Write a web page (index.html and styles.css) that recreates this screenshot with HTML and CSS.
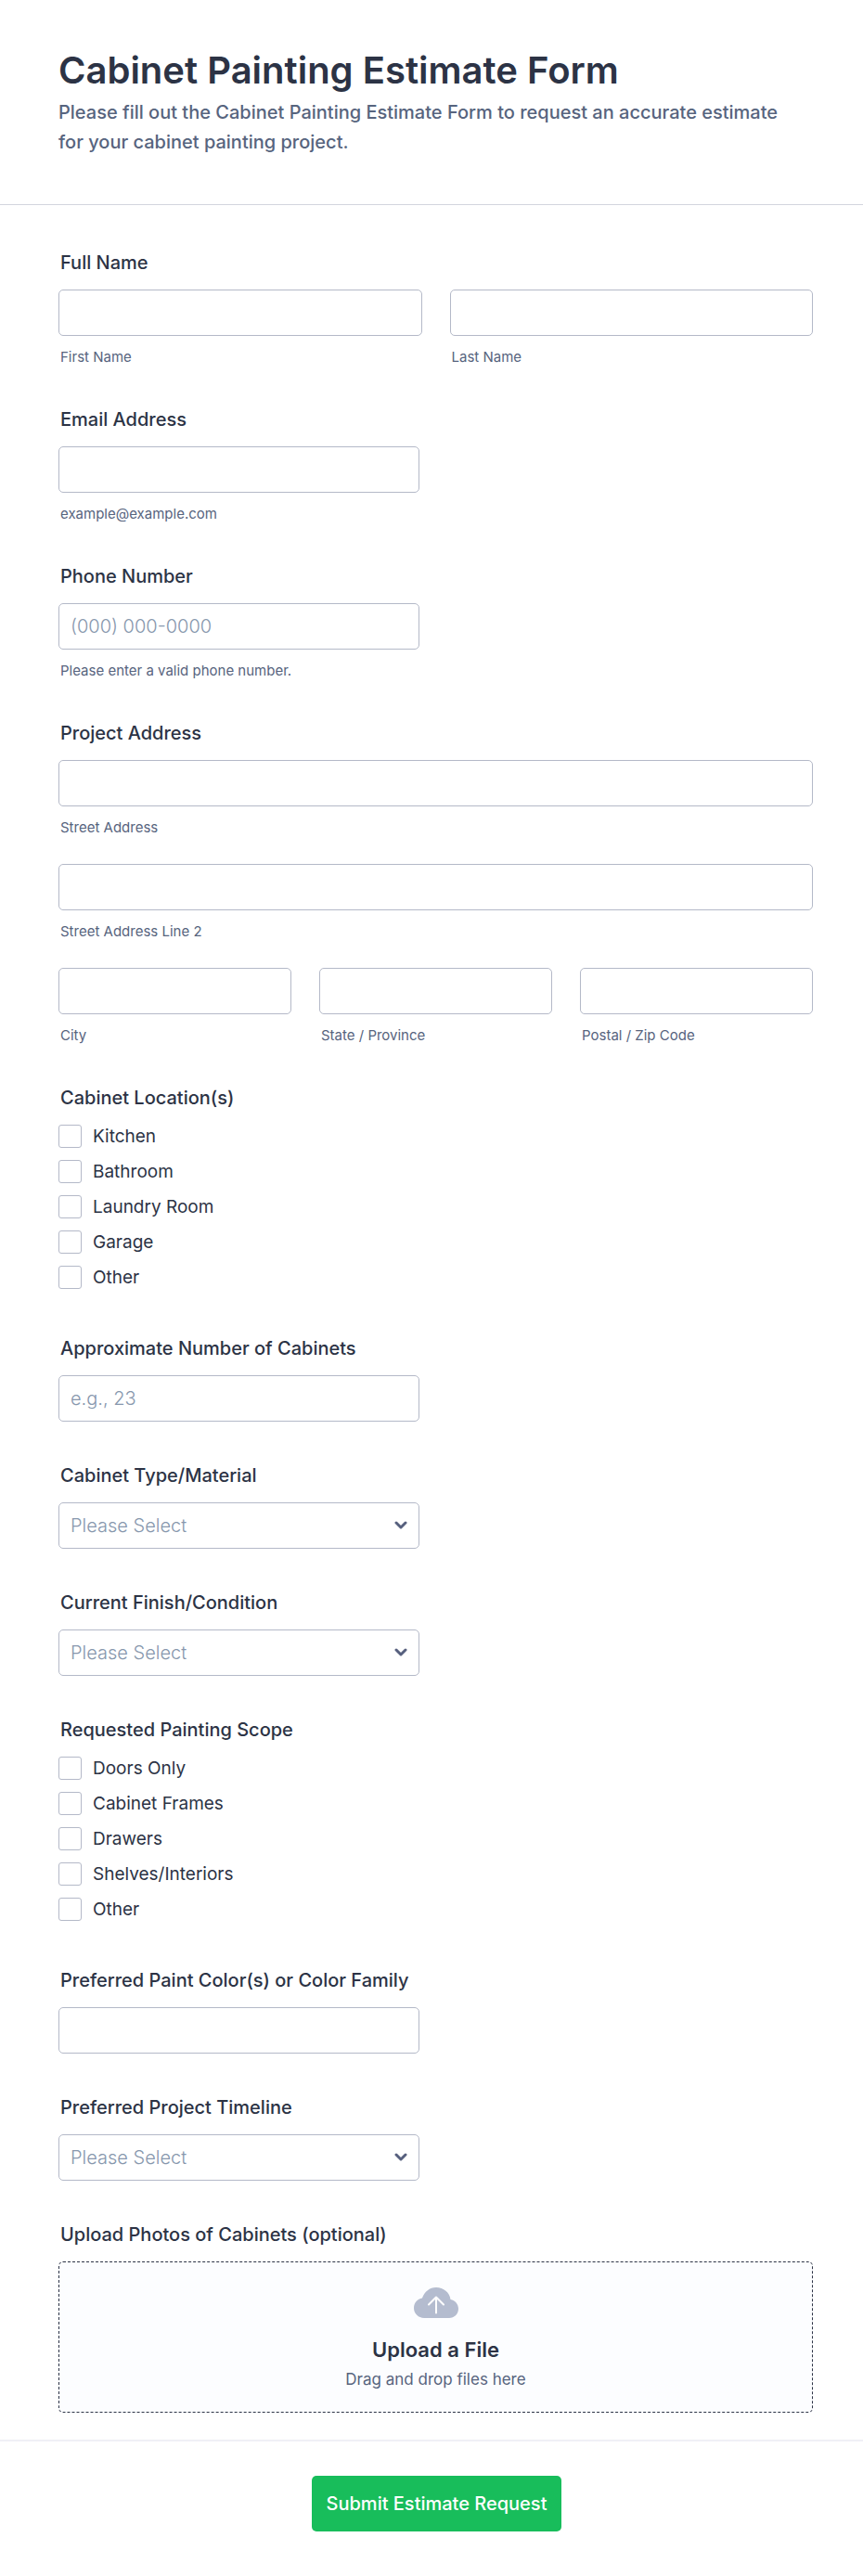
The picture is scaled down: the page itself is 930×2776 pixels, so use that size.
FILE: index.html
```html
<!DOCTYPE html>
<html lang="en">
<head>
    <meta charset="UTF-8">
    <meta name="viewport" content="width=device-width, initial-scale=1.0">
    <title>Cabinet Painting Estimate Form</title>
    <link rel="stylesheet" href="styles.css">
</head>
<body>
    <form class="estimate-form">
        <header class="form-header">
            <h1>Cabinet Painting Estimate Form</h1>
            <p>Please fill out the Cabinet Painting Estimate Form to request an accurate estimate for your cabinet painting project.</p>
        </header>

        <main class="form-body">
            <!-- Contact details -->
            <fieldset class="field">
                <legend class="field-label">Full Name</legend>
                <div class="columns two">
                    <div>
                        <input class="control" type="text" id="firstName" name="firstName">
                        <label class="sub-label" for="firstName">First Name</label>
                    </div>
                    <div>
                        <input class="control" type="text" id="lastName" name="lastName">
                        <label class="sub-label" for="lastName">Last Name</label>
                    </div>
                </div>
            </fieldset>

            <div class="field">
                <label class="field-label" for="email">Email Address</label>
                <input class="control half" type="email" id="email" name="email">
                <label class="sub-label" for="email">example@example.com</label>
            </div>

            <div class="field">
                <label class="field-label" for="phone">Phone Number</label>
                <input class="control half" type="tel" id="phone" name="phone" placeholder="(000) 000-0000">
                <label class="sub-label" for="phone">Please enter a valid phone number.</label>
            </div>

            <fieldset class="field">
                <legend class="field-label">Project Address</legend>
                <div class="address">
                    <div>
                        <input class="control" type="text" id="street" name="street">
                        <label class="sub-label" for="street">Street Address</label>
                    </div>
                    <div>
                        <input class="control" type="text" id="street2" name="street2">
                        <label class="sub-label" for="street2">Street Address Line 2</label>
                    </div>
                    <div class="columns three">
                        <div>
                            <input class="control" type="text" id="city" name="city">
                            <label class="sub-label" for="city">City</label>
                        </div>
                        <div>
                            <input class="control" type="text" id="state" name="state">
                            <label class="sub-label" for="state">State / Province</label>
                        </div>
                        <div>
                            <input class="control" type="text" id="zip" name="zip">
                            <label class="sub-label" for="zip">Postal / Zip Code</label>
                        </div>
                    </div>
                </div>
            </fieldset>

            <!-- Cabinet details -->
            <fieldset class="field">
                <legend class="field-label">Cabinet Location(s)</legend>
                <div class="options">
                    <label class="option"><input type="checkbox" name="location" value="kitchen">Kitchen</label>
                    <label class="option"><input type="checkbox" name="location" value="bathroom">Bathroom</label>
                    <label class="option"><input type="checkbox" name="location" value="laundry">Laundry Room</label>
                    <label class="option"><input type="checkbox" name="location" value="garage">Garage</label>
                    <label class="option"><input type="checkbox" name="location" value="other">Other</label>
                </div>
            </fieldset>

            <div class="field">
                <label class="field-label" for="count">Approximate Number of Cabinets</label>
                <input class="control half" type="text" inputmode="numeric" id="count" name="count" placeholder="e.g., 23">
            </div>

            <div class="field">
                <label class="field-label" for="material">Cabinet Type/Material</label>
                <div class="select half">
                    <select class="control" id="material" name="material">
                        <option value="">Please Select</option>
                        <option>Wood</option>
                        <option>MDF</option>
                        <option>Laminate</option>
                    </select>
                    <svg class="chevron" viewBox="0 0 14 9" aria-hidden="true"><path d="M2 2l5 5 5-5"/></svg>
                </div>
            </div>

            <div class="field">
                <label class="field-label" for="finish">Current Finish/Condition</label>
                <div class="select half">
                    <select class="control" id="finish" name="finish">
                        <option value="">Please Select</option>
                        <option>Painted</option>
                        <option>Stained</option>
                        <option>Unfinished</option>
                    </select>
                    <svg class="chevron" viewBox="0 0 14 9" aria-hidden="true"><path d="M2 2l5 5 5-5"/></svg>
                </div>
            </div>

            <fieldset class="field">
                <legend class="field-label">Requested Painting Scope</legend>
                <div class="options">
                    <label class="option"><input type="checkbox" name="scope" value="doors">Doors Only</label>
                    <label class="option"><input type="checkbox" name="scope" value="frames">Cabinet Frames</label>
                    <label class="option"><input type="checkbox" name="scope" value="drawers">Drawers</label>
                    <label class="option"><input type="checkbox" name="scope" value="shelves">Shelves/Interiors</label>
                    <label class="option"><input type="checkbox" name="scope" value="other">Other</label>
                </div>
            </fieldset>

            <div class="field">
                <label class="field-label" for="color">Preferred Paint Color(s) or Color Family</label>
                <input class="control half" type="text" id="color" name="color">
            </div>

            <div class="field">
                <label class="field-label" for="timeline">Preferred Project Timeline</label>
                <div class="select half">
                    <select class="control" id="timeline" name="timeline">
                        <option value="">Please Select</option>
                        <option>As soon as possible</option>
                        <option>Within a month</option>
                        <option>Flexible</option>
                    </select>
                    <svg class="chevron" viewBox="0 0 14 9" aria-hidden="true"><path d="M2 2l5 5 5-5"/></svg>
                </div>
            </div>

            <div class="field">
                <label class="field-label" for="photos">Upload Photos of Cabinets (optional)</label>
                <label class="upload">
                    <input type="file" id="photos" name="photos" multiple>
                    <svg class="upload-icon" viewBox="0 0 48 33" aria-hidden="true">
                        <path class="cloud" d="M11 33C5 33 0 28.300 0 22.300C0 16.500 4 12.500 9 11.500C11.500 4.500 17 0 24 0C32 0 38.500 5.500 39.500 13C44.500 14 48 18.200 48 23C48 28.700 43.500 33 38 33Z"/>
                        <path class="arrow" d="M24 27.500V10.500M16 18.500l8-8 8 8"/>
                    </svg>
                    <span class="upload-title">Upload a File</span>
                    <span class="upload-hint">Drag and drop files here</span>
                </label>
            </div>
        </main>

        <footer class="form-footer">
            <button type="submit">Submit Estimate Request</button>
        </footer>
    </form>
</body>
</html>
```
FILE: styles.css
```css
* {
    margin: 0;
    padding: 0;
    box-sizing: border-box;
}
body {
    font-family: Inter, sans-serif;
    background-color: #fff;
    color: #2c3345;
}
.form-header {
    padding: 52px 84px 51px 63px;
    border-bottom: 1px solid #d2d5de;
}
.form-header h1 {
    font-size: 40px;
    line-height: 48px;
    font-weight: 600;
}
.form-header p {
    margin-top: 5px;
    font-size: 20px;
    line-height: 32px;
    font-weight: 500;
    color: #57647e;
}
.form-body {
    display: flex;
    flex-direction: column;
    gap: 46px;
    padding: 50px 54px 29px 63px;
}
.field {
    border: none;
    min-width: 0;
}
.field-label {
    display: block;
    margin-bottom: 17px;
    padding-left: 2px;
    font-size: 20px;
    line-height: 24px;
    font-weight: 500;
}
.sub-label {
    display: block;
    margin-top: 14px;
    padding-left: 2px;
    font-size: 15px;
    line-height: 18px;
    color: #57647e;
}

/* Text boxes and drop-downs */
.control {
    display: block;
    width: 100%;
    height: 50px;
    padding: 0 12px;
    border: 1px solid #b4b9c8;
    border-radius: 5px;
    background-color: #fff;
    font-family: inherit;
    font-size: 20px;
    font-weight: 300;
    color: #2c3345;
}
.control::placeholder {
    color: #8797ad;
}
.half {
    width: 100%;
    max-width: 389px;
}
.select {
    position: relative;
}
.select .control {
    appearance: none;
    color: #8797ad;
}
.chevron {
    position: absolute;
    right: 13px;
    top: 20px;
    width: 14px;
    height: 9px;
    fill: none;
    stroke: #57607e;
    stroke-width: 3;
    stroke-linecap: round;
    stroke-linejoin: round;
    pointer-events: none;
}
.columns {
    display: grid;
    gap: 30px;
}
.two {
    grid-template-columns: 1fr 1fr;
}
.three {
    grid-template-columns: 1fr 1fr 1fr;
}
.address {
    display: flex;
    flex-direction: column;
    gap: 30px;
}

/* Checkbox lists */
.options {
    display: flex;
    flex-direction: column;
    align-items: flex-start;
    gap: 13px;
    padding-bottom: 6px;
}
.option {
    display: flex;
    align-items: center;
    gap: 12px;
    font-size: 19px;
    line-height: 25px;
}
.option input {
    appearance: none;
    width: 25px;
    height: 25px;
    border: 1px solid #b4b9c8;
    border-radius: 3px;
    background-color: #fff;
}
.option input:checked {
    background-color: #18bd5b;
}

/* File upload */
.upload {
    position: relative;
    display: flex;
    flex-direction: column;
    align-items: center;
    padding: 27px 16px 21px;
    border: 1px dashed #2c3345;
    border-radius: 5px;
    background-color: #fcfdff;
    cursor: pointer;
}
.upload input {
    position: absolute;
    inset: 0;
    opacity: 0;
}
.upload-icon {
    width: 48px;
    height: 33px;
}
.cloud {
    fill: #b4bccf;
}
.arrow {
    fill: none;
    stroke: #fff;
    stroke-width: 2;
    stroke-linecap: round;
    stroke-linejoin: round;
}
.upload-title {
    margin-top: 20px;
    font-size: 22px;
    line-height: 28px;
    font-weight: 600;
}
.upload-hint {
    margin-top: 4px;
    font-size: 17px;
    line-height: 28px;
    color: #57647e;
}

.form-footer {
    display: flex;
    justify-content: center;
    padding: 37px 52px 48px 63px;
    border-top: 2px solid #f0f0f6;
}
.form-footer button {
    height: 60px;
    padding: 0 16px;
    border: none;
    border-radius: 5px;
    background-color: #18bd5b;
    color: #fff;
    font-family: inherit;
    font-size: 20px;
    font-weight: 500;
    cursor: pointer;
}
```
